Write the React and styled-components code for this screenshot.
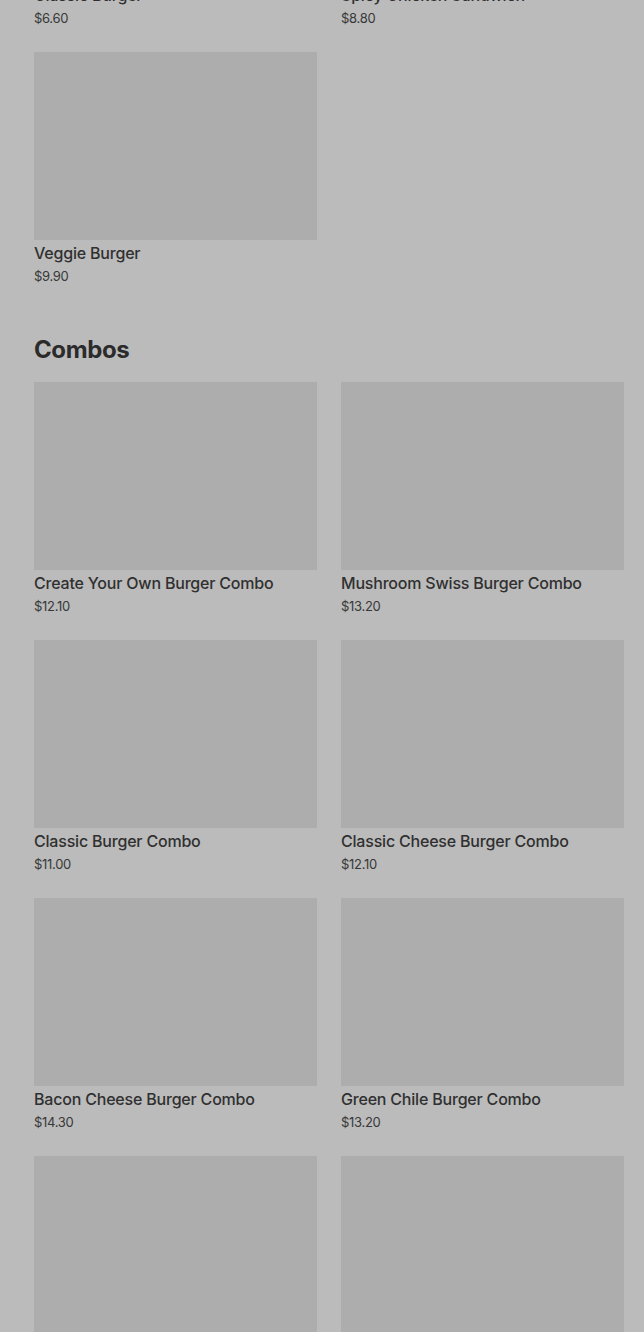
import React from "react";
import styled, { createGlobalStyle } from "styled-components";

const GlobalStyle = createGlobalStyle`
  html, body {
    margin: 0;
    padding: 0;
    background: #bbbbbb;
    overflow: hidden;
  }
  body {
    font-family: Inter, "Noto Sans", "Liberation Sans", sans-serif;
    color: #2e2e2e;
  }
`;

const Page = styled.main`
  display: flex;
  flex-direction: column;
  gap: 49px;
  padding: 0 20px 40px 34px;
  margin-top: -254px; /* scrolled position of the menu */
`;

const Section = styled.section`
  display: flex;
  flex-direction: column;
  gap: 16px;
`;

const Heading = styled.h2`
  margin: 0;
  font-size: 24px;
  line-height: 32px;
  font-weight: 700;
  color: #2b2b2b;
  letter-spacing: -0.4px;
`;

const Grid = styled.div`
  display: grid;
  grid-template-columns: 1fr 1fr;
  column-gap: 24px;
  row-gap: 25px;
`;

const Card = styled.article`
  display: flex;
  flex-direction: column;
`;

const Thumb = styled.div`
  height: 188px;
  background: #adadad;
`;

const Title = styled.div`
  margin-top: 3px;
  font-size: 16px;
  line-height: 20px;
  font-weight: 500;
  color: #303030;
  letter-spacing: -0.2px;
  white-space: nowrap;
`;

const Price = styled.div`
  margin-top: 4px;
  font-size: 13px;
  line-height: 18px;
  font-weight: 400;
  color: #383838;
  letter-spacing: -0.3px;
`;

const menu = [
  {
    name: "Burgers",
    items: [
      ["Classic Burger", "$6.60"],
      ["Spicy Chicken Sandwich", "$8.80"],
      ["Veggie Burger", "$9.90"],
    ],
  },
  {
    name: "Combos",
    items: [
      ["Create Your Own Burger Combo", "$12.10"],
      ["Mushroom Swiss Burger Combo", "$13.20"],
      ["Classic Burger Combo", "$11.00"],
      ["Classic Cheese Burger Combo", "$12.10"],
      ["Bacon Cheese Burger Combo", "$14.30"],
      ["Green Chile Burger Combo", "$13.20"],
      ["Spicy Chicken Sandwich Combo", "$12.10"],
      ["Veggie Burger Combo", "$13.20"],
    ],
  },
];

export default function App() {
  return (
    <>
      <GlobalStyle />
      <Page>
        {menu.map((section) => (
          <Section key={section.name}>
            <Heading>{section.name}</Heading>
            <Grid>
              {section.items.map(([title, price]) => (
                <Card key={title}>
                  <Thumb />
                  <Title>{title}</Title>
                  <Price>{price}</Price>
                </Card>
              ))}
            </Grid>
          </Section>
        ))}
      </Page>
    </>
  );
}
